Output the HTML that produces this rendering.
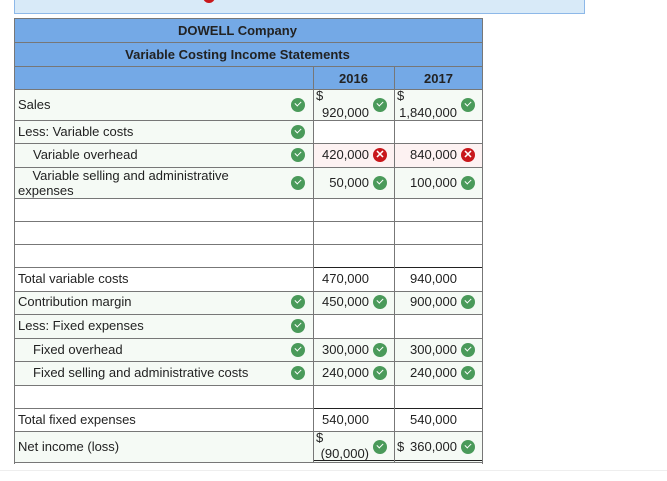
<!DOCTYPE html>
<html><head><meta charset="utf-8"><style>
body{margin:0;width:667px;height:481px;background:#fff;font-family:"Liberation Sans",Arial,sans-serif;font-size:13px;color:#222;position:relative;overflow:hidden}
.a{position:absolute}
.row{position:absolute;left:14px;width:469px;border-top:1px solid #777;box-sizing:border-box}
.hd{background:#74a9e6;font-weight:bold;text-align:center;padding-right:22px}
.v{position:absolute;top:18px;width:1px;background:#777}
.c{position:absolute;width:14px;height:14px;border-radius:50%;background:#4a9a5a}
.c:after{content:"";position:absolute;left:4px;top:3px;width:5px;height:3px;border-left:1.5px solid #fff;border-bottom:1.5px solid #fff;transform:rotate(-45deg)}
.x{position:absolute;width:14px;height:14px;border-radius:50%;background:#c8171b;color:#fff;font-size:11px;line-height:14px;text-align:center;font-weight:bold}
.t{position:absolute;white-space:nowrap}
.r{position:absolute;text-align:right;white-space:nowrap}
</style></head><body>
<div class="a" style="left:14px;top:-2px;width:571px;height:16px;background:#d8eaf8;border:1px solid #8db8e8;box-sizing:border-box"></div>
<div class="a" style="left:203px;top:-5px;width:12px;height:8px;background:#c8171b;border-radius:0 0 6px 6px"></div>

<div class="row hd" style="top:18px;height:24px;line-height:24px">DOWELL Company</div>
<div class="row hd" style="top:42px;height:24px;line-height:24px">Variable Costing Income Statements</div>
<div class="row hd" style="top:66px;height:23px"></div>
<div class="t" style="left:313px;width:81px;top:71px;text-align:center;font-weight:bold">2016</div>
<div class="t" style="left:394px;width:89px;top:71px;text-align:center;font-weight:bold">2017</div>

<div class="row" style="top:89px;height:31px;background:#f5faf5"></div>
<div class="row" style="top:120px;height:23px;background:#f5faf5"></div>
<div class="a" style="left:313px;top:121px;width:170px;height:22px;background:#fff"></div>
<div class="row" style="top:143px;height:24px;background:#f5faf5"></div>
<div class="a" style="left:314px;top:144px;width:169px;height:23px;background:#fdf2f2"></div>
<div class="row" style="top:167px;height:31px;background:#f5faf5"></div>
<div class="row" style="top:198px;height:23px"></div>
<div class="row" style="top:221px;height:23px"></div>
<div class="row" style="top:244px;height:23px"></div>
<div class="row" style="top:267px;height:24px"></div>
<div class="row" style="top:291px;height:23px;background:#f5faf5"></div>
<div class="row" style="top:314px;height:24px;background:#f5faf5"></div>
<div class="a" style="left:313px;top:315px;width:170px;height:23px;background:#fff"></div>
<div class="row" style="top:338px;height:23px;background:#f5faf5"></div>
<div class="row" style="top:361px;height:24px;background:#f5faf5"></div>
<div class="row" style="top:385px;height:23px"></div>
<div class="row" style="top:408px;height:23px"></div>
<div class="row" style="top:431px;height:32px;background:#f5faf5;border-bottom:1px solid #777"></div>
<div class="a" style="left:313px;top:267px;width:170px;height:1px;background:#222"></div>
<div class="a" style="left:313px;top:408px;width:170px;height:1px;background:#222"></div>
<div class="a" style="left:313px;top:460px;width:170px;height:1px;background:#222"></div>
<div class="v" style="left:14px;height:446px"></div>
<div class="v" style="left:482px;height:446px"></div>
<div class="v" style="left:313px;top:66px;height:397px"></div>
<div class="v" style="left:394px;top:66px;height:397px"></div>
<div class="a" style="left:314px;top:121px;width:80px;height:22px;background:#fff"></div>
<div class="a" style="left:314px;top:315px;width:80px;height:22px;background:#fff"></div>

<div class="t" style="left:18px;top:97px">Sales</div>
<div class="t" style="left:18px;top:124px">Less: Variable costs</div>
<div class="t" style="left:33px;top:147px">Variable overhead</div>
<div class="t" style="left:18px;top:168px;line-height:15px">&nbsp;&nbsp;&nbsp;&nbsp;Variable selling and administrative<br>expenses</div>
<div class="t" style="left:18px;top:271px">Total variable costs</div>
<div class="t" style="left:18px;top:294px">Contribution margin</div>
<div class="t" style="left:18px;top:318px">Less: Fixed expenses</div>
<div class="t" style="left:33px;top:342px">Fixed overhead</div>
<div class="t" style="left:33px;top:365px">Fixed selling and administrative costs</div>
<div class="t" style="left:18px;top:412px">Total fixed expenses</div>
<div class="t" style="left:18px;top:439px">Net income (loss)</div>

<div class="c" style="left:291px;top:98px"></div>
<div class="c" style="left:291px;top:125px"></div>
<div class="c" style="left:291px;top:148px"></div>
<div class="c" style="left:291px;top:176px"></div>
<div class="c" style="left:291px;top:295px"></div>
<div class="c" style="left:291px;top:319px"></div>
<div class="c" style="left:291px;top:343px"></div>
<div class="c" style="left:291px;top:366px"></div>

<div class="t" style="left:316px;top:88px">$</div>
<div class="r" style="right:298px;top:105px">920,000</div><div class="c" style="left:373px;top:98px"></div>
<div class="t" style="left:397px;top:88px">$</div>
<div class="r" style="right:210px;top:105px">1,840,000</div><div class="c" style="left:461px;top:98px"></div>

<div class="r" style="right:298px;top:147px">420,000</div><div class="x" style="left:373px;top:148px">✕</div>
<div class="r" style="right:210px;top:147px">840,000</div><div class="x" style="left:461px;top:148px">✕</div>
<div class="r" style="right:298px;top:175px">50,000</div><div class="c" style="left:373px;top:176px"></div>
<div class="r" style="right:210px;top:175px">100,000</div><div class="c" style="left:461px;top:176px"></div>

<div class="r" style="right:298px;top:271px">470,000</div>
<div class="r" style="right:210px;top:271px">940,000</div>
<div class="r" style="right:298px;top:294px">450,000</div><div class="c" style="left:373px;top:295px"></div>
<div class="r" style="right:210px;top:294px">900,000</div><div class="c" style="left:461px;top:295px"></div>
<div class="r" style="right:298px;top:342px">300,000</div><div class="c" style="left:373px;top:343px"></div>
<div class="r" style="right:210px;top:342px">300,000</div><div class="c" style="left:461px;top:343px"></div>
<div class="r" style="right:298px;top:365px">240,000</div><div class="c" style="left:373px;top:366px"></div>
<div class="r" style="right:210px;top:365px">240,000</div><div class="c" style="left:461px;top:366px"></div>
<div class="r" style="right:298px;top:412px">540,000</div>
<div class="r" style="right:210px;top:412px">540,000</div>
<div class="t" style="left:316px;top:430px">$</div>
<div class="r" style="right:298px;top:446px">(90,000)</div><div class="c" style="left:373px;top:440px"></div>
<div class="t" style="left:397px;top:439px">$</div>
<div class="r" style="right:210px;top:439px">360,000</div><div class="c" style="left:461px;top:440px"></div>

<div class="a" style="left:0;top:470px;width:667px;height:1px;background:#eee"></div>
</body></html>
